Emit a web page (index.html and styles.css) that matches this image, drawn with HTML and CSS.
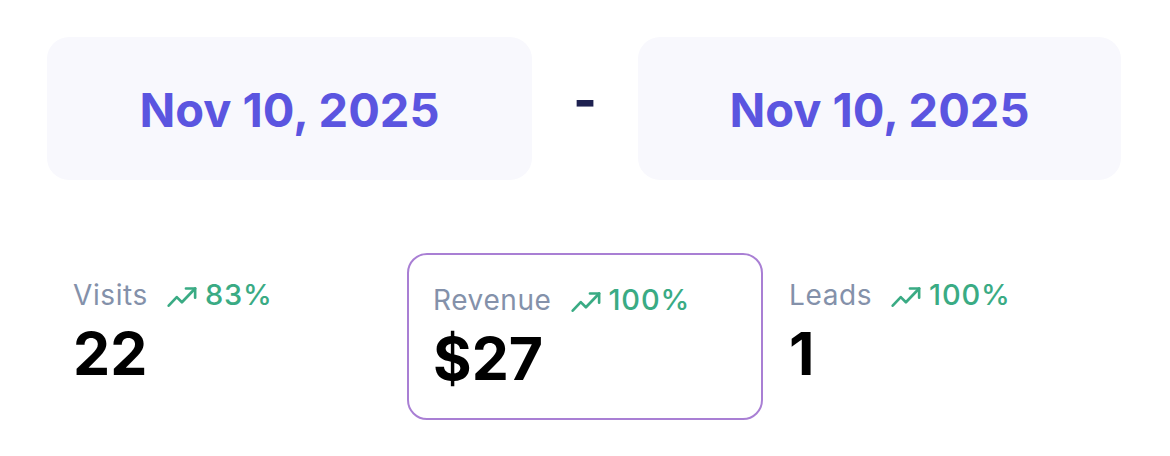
FILE: index.html
```html
<!DOCTYPE html>
<html>
<head>
<meta charset="utf-8">
<link rel="stylesheet" href="styles.css">
</head>
<body>
<div class="page">
  <div class="range">
    <div class="date-box">Nov 10, 2025</div>
    <div class="dash">-</div>
    <div class="date-box">Nov 10, 2025</div>
  </div>
  <div class="stats">
    <div class="stat">
      <div class="stat-head">
        <span class="label">Visits</span>
        <span class="trend">
          <svg class="trend-icon" viewBox="0 0 27 20" fill="none" stroke="currentColor" stroke-width="2.3" stroke-linecap="round" stroke-linejoin="round"><polyline points="1.5 18 8.5 10.5 13 15 24.5 3"/><polyline points="16.5 3 24.5 3 24.5 11"/></svg>
          83%
        </span>
      </div>
      <div class="value">22</div>
    </div>
    <div class="stat active">
      <div class="stat-head">
        <span class="label">Revenue</span>
        <span class="trend">
          <svg class="trend-icon" viewBox="0 0 27 20" fill="none" stroke="currentColor" stroke-width="2.3" stroke-linecap="round" stroke-linejoin="round"><polyline points="1.5 18 8.5 10.5 13 15 24.5 3"/><polyline points="16.5 3 24.5 3 24.5 11"/></svg>
          100%
        </span>
      </div>
      <div class="value">$27</div>
    </div>
    <div class="stat">
      <div class="stat-head">
        <span class="label">Leads</span>
        <span class="trend">
          <svg class="trend-icon" viewBox="0 0 27 20" fill="none" stroke="currentColor" stroke-width="2.3" stroke-linecap="round" stroke-linejoin="round"><polyline points="1.5 18 8.5 10.5 13 15 24.5 3"/><polyline points="16.5 3 24.5 3 24.5 11"/></svg>
          100%
        </span>
      </div>
      <div class="value">1</div>
    </div>
  </div>
</div>
</body>
</html>
```
FILE: styles.css
```css
* { box-sizing: border-box; }
html, body { margin: 0; padding: 0; background: #ffffff; }
body { font-family: Inter, "Noto Sans", sans-serif; }
.page {
  width: 1170px;
  height: 456px;
  padding: 37px 49px 0 47px;
}
.range {
  display: grid;
  grid-template-columns: 485px 1fr 483px;
  align-items: stretch;
}
.date-box {
  height: 143px;
  background: #f8f8fd;
  border-radius: 22px;
  display: flex;
  align-items: center;
  justify-content: center;
  color: #5b55e0;
  font-size: 47px;
  font-weight: 700;
  padding-top: 2px;
}
.dash {
  display: flex;
  align-items: center;
  justify-content: center;
  color: #1e2150;
  font-size: 50px;
  font-weight: 800;
  padding-bottom: 18px;
  padding-left: 0;
}
.stats {
  margin-top: 73px;
  display: grid;
  grid-template-columns: 360px 356px 1fr;
  align-items: start;
}
.stat {
  border: 2px solid transparent;
  border-radius: 20px;
  padding: 24px 24px 31px 24px;
}
.stat.active {
  border-color: #a97fd4;
  padding-top: 29px;
  height: 167px;
}
.stat-head {
  display: flex;
  align-items: center;
  height: 32px;
}
.label {
  font-size: 28px;
  line-height: 32px;
  color: #8491aa;
  font-weight: 400;
  letter-spacing: 0.6px;
}
.trend {
  display: flex;
  align-items: center;
  margin-left: 19px;
  color: #3aab84;
  font-size: 29px;
  line-height: 32px;
  font-weight: 500;
  letter-spacing: 0.8px;
  gap: 7px;
}
.trend-icon {
  width: 31px;
  height: 23px;
  margin-top: 2px;
}
.value {
  margin-top: 13px;
  font-size: 59px;
  line-height: 60px;
  font-weight: 700;
  color: #000000;
}
```
